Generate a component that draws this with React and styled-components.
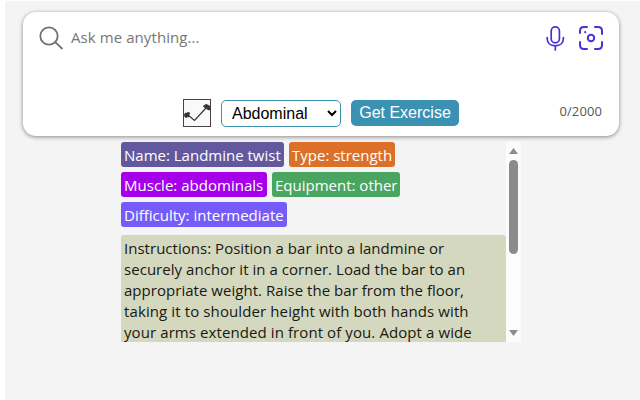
import React from "react";
import styled, { createGlobalStyle } from "styled-components";

const Global = createGlobalStyle`
  * { box-sizing: border-box; }
  body { margin: 0; background: #fff; overflow: hidden; }
`;

const Page = styled.main`
  height: 399px;
  margin: 1px 0 0 5px;
  padding: 11px 21px 0 18px;
  background: #f4f4f4;
  font-family: "Open Sans", "Noto Sans", sans-serif;
`;

const Card = styled.section`
  display: flex;
  flex-direction: column;
  justify-content: space-between;
  width: 596px;
  height: 124px;
  padding: 13px 15px 9px;
  border-radius: 13px;
  background: #fff;
  box-shadow: 0 1px 4px rgba(0, 0, 0, 0.45);
`;

const SearchRow = styled.div`
  display: flex;
  align-items: center;
  height: 26px;
`;

const Prompt = styled.span`
  flex: 1;
  margin: 0 0 2px 7px;
  color: #767676;
  font-size: 15px;
  line-height: 24px;
  letter-spacing: ${(p) => p.$spacing}px;
`;

const Tools = styled.div`
  display: flex;
  align-items: center;
  gap: 10px;
`;

const ControlRow = styled.div`
  display: flex;
  align-items: flex-start;
  height: 28px;
  padding-left: 145px;
`;

const Thumbnail = styled.svg`
  flex: none;
  width: 28px;
  height: 28px;
  margin-right: 10px;
`;

const MuscleSelect = styled.select`
  width: 120px;
  height: 27px;
  margin: 1px 10px 0 0;
  padding: 0 0 0 6px;
  border: 1px solid #3a91b2;
  border-radius: 5px;
  background: #fff;
  color: #000;
  font: 16px "Liberation Sans", Arial, sans-serif;
`;

const Submit = styled.button`
  width: 108px;
  height: 26px;
  margin-top: 1px;
  padding: 0;
  border: 0;
  border-radius: 5px;
  background: #3b91b2;
  color: #fff;
  font: 16px "Liberation Sans", Arial, sans-serif;
`;

const Counter = styled.span`
  margin: 2px 2px 0 auto;
  color: #555;
  font-size: 13px;
  line-height: 20px;
  letter-spacing: 0.1px;
`;

const Results = styled.section`
  display: flex;
  width: 400px;
  height: 200px;
  margin: 6px 0 0 98px;
  overflow: hidden;
`;

const Details = styled.div`
  flex: 1;
  min-width: 0;
`;

const TagRow = styled.div`
  display: flex;
  gap: 5px;
  height: 30px;
`;

const Tag = styled.span`
  width: ${(p) => p.$width}px;
  height: 25px;
  padding-left: 3px;
  border-radius: 3px;
  background: ${(p) => p.$color};
  color: #fff;
  font-size: 15px;
  line-height: 26px;
  white-space: nowrap;
  letter-spacing: ${(p) => p.$spacing}px;
`;

const Instructions = styled.div`
  height: 120px;
  margin-top: 3px;
  padding: 3px 3px 0;
  border-radius: 3px;
  background: #d4d8bf;
  color: #171912;
  font-size: 15px;
  line-height: 21px;
`;

const Line = styled.div`
  white-space: nowrap;
  letter-spacing: ${(p) => p.$spacing}px;
`;

const Scrollbar = styled.div`
  display: flex;
  flex-direction: column;
  align-items: center;
  width: 15px;
  padding: 6px 0;
  background: #fcfcfc;
`;

const Arrow = styled.svg`
  width: 9px;
  height: 6px;
  flex: none;
`;

const Thumb = styled.div`
  width: 9px;
  height: 94px;
  margin: 6px 0 auto;
  border-radius: 5px;
  background: #8b8b8b;
`;

const Icon = styled.svg`
  flex: none;
  fill: none;
  stroke-linecap: round;
  stroke-linejoin: round;
`;

const tags = [
  [
    ["Name: Landmine twist", "#62589e", 163, 0],
    ["Type: strength", "#dc7029", 106, 0],
  ],
  [
    ["Muscle: abdominals", "#a600ea", 146, 0.02],
    ["Equipment: other", "#4aa560", 128, 0],
  ],
  [["Difficulty: intermediate", "#755cf8", 166, 0]],
];

const lines = [
  ["Instructions: Position a bar into a landmine or", 0.025],
  ["securely anchor it in a corner. Load the bar to an", 0.04],
  ["appropriate weight. Raise the bar from the floor,", 0.035],
  ["taking it to shoulder height with both hands with", 0.11],
  ["your arms extended in front of you. Adopt a wide", 0.09],
];

export default function App() {
  return (
    <>
      <Global />
      <Page>
        <Card>
          <SearchRow>
            <Icon width="26" height="26" viewBox="0 0 26 26" stroke="#707070" strokeWidth="1.8">
              <circle cx="11" cy="11" r="8.7" />
              <path d="M17.2 17.2 24 23.5" />
            </Icon>
            <Prompt $spacing={0.08}>Ask me anything...</Prompt>
            <Tools>
              <Icon width="26" height="26" viewBox="0 0 26 26" stroke="#4b2fdb" strokeWidth="1.7">
                <rect x="9.2" y="1.8" width="8.2" height="16" rx="4.1" />
                <path d="M5.2 12.5v1.2c0 4.4 3.4 7.1 8.1 7.1s8.1-2.7 8.1-7.1v-1.2M13.3 21v4" />
              </Icon>
              <Icon width="26" height="26" viewBox="0 0 26 26" stroke="#4b2fdb" strokeWidth="2">
                <path d="M2 8V6q0-4 4-4h3M17 2h3q4 0 4 4v3M24 17v3q0 4-4 4h-3M9 24H6q-4 0-4-4v-3" />
                <circle cx="13" cy="13" r="3.2" />
                <circle cx="7.2" cy="7.2" r="1.1" fill="#4b2fdb" stroke="none" />
              </Icon>
            </Tools>
          </SearchRow>
          <ControlRow>
            <Thumbnail viewBox="0 0 28 28">
              <rect x=".5" y=".5" width="27" height="27" fill="#f9f9f9" stroke="#444" />
              <path d="M5 16 11.5 21.5 23 9" fill="none" stroke="#333" strokeWidth="1.2" />
              <path d="m1 17 1-3 2 0 1-1 2 1-1 2 0 2-2 0-1 1ZM20 7l2-1 1-1 2 1 2 1v4l-2 0-1-1-2-1Z" fill="#333" stroke="#333" strokeWidth=".4" />
            </Thumbnail>
            <MuscleSelect defaultValue="Abdominal">
              <option>Abdominal</option>
            </MuscleSelect>
            <Submit>Get Exercise</Submit>
            <Counter>0/2000</Counter>
          </ControlRow>
        </Card>
        <Results>
          <Details>
            {tags.map((row) => (
              <TagRow key={row[0][0]}>
                {row.map(([text, color, width, spacing]) => (
                  <Tag key={text} $color={color} $width={width} $spacing={spacing}>{text}</Tag>
                ))}
              </TagRow>
            ))}
            <Instructions>
              {lines.map(([text, spacing]) => (
                <Line key={text} $spacing={spacing}>{text}</Line>
              ))}
            </Instructions>
          </Details>
          <Scrollbar>
            <Arrow viewBox="0 0 9 6"><path d="M0 6 4.5 0 9 6Z" fill="#8b8b8b" /></Arrow>
            <Thumb />
            <Arrow viewBox="0 0 9 6"><path d="M0 0h9L4.5 6Z" fill="#8b8b8b" /></Arrow>
          </Scrollbar>
        </Results>
      </Page>
    </>
  );
}
